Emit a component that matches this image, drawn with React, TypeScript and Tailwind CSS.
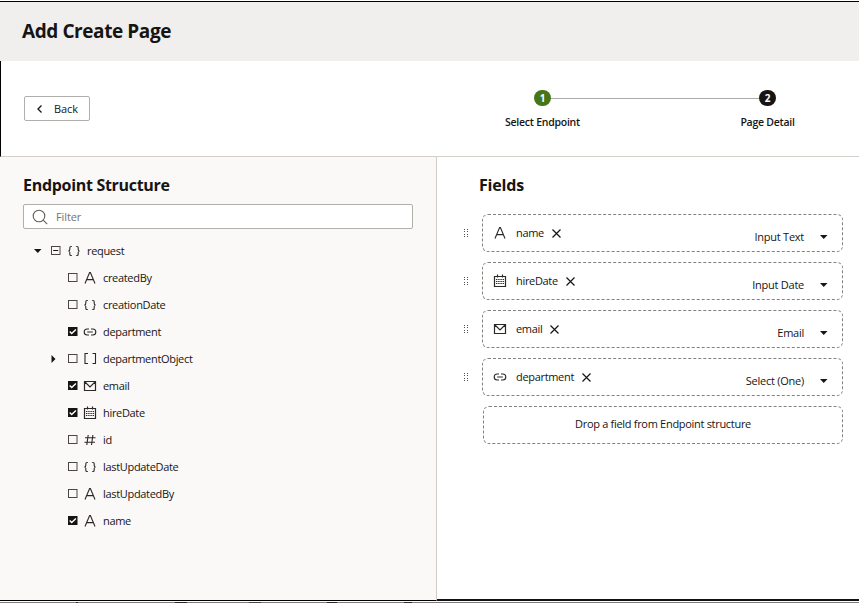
import React from "react";

type IconName = "text" | "braces" | "link" | "brackets" | "mail" | "calendar" | "hash";

function FieldIcon({ name }: { name: IconName }) {
  return (
    <svg width="14" height="14" viewBox="0 0 14 14" fill="none" stroke="#2b2825" strokeWidth="1.1" className="block shrink-0">
      {name === "text" && <path d="M2 12.5 6.6 1.5h.8L12 12.5M3.7 8.6h6.6" />}
      {name === "braces" && (
        <path d="M4.8 2.5H4c-.9 0-1.2.5-1.2 1.3v1.7C2.8 6.4 2.3 7 1.3 7c1 0 1.5.6 1.5 1.5v1.7c0 .8.3 1.3 1.2 1.3h.8M9.2 2.5h.8c.9 0 1.2.5 1.2 1.3v1.7c0 .9.5 1.5 1.5 1.5-1 0-1.5.6-1.5 1.5v1.7c0 .8-.3 1.3-1.2 1.3h-.8" />
      )}
      {name === "brackets" && <path d="M5 1.5H2v10h3M9.5 1.5h3v10h-3" />}
      {name === "link" && <path d="M6 4H4.2a3 3 0 0 0 0 6H6M8 4h1.8a3 3 0 0 1 0 6H8M4.2 7h5.6" strokeWidth="1.1" />}
      {name === "mail" && <path d="M1.5 2.5h11v9h-11zM2 3l5 5 5-5" strokeWidth="1.2" />}
      {name === "calendar" && (
        <>
          <path d="M1.5 2.5h11v10h-11zM4.5.5v3M9.5.5v3" strokeWidth="1.2" />
          <path d="M3 5.5h8M3 7.5h8M3 9.5h8" strokeDasharray="1.4 .8" />
        </>
      )}
      {name === "hash" && <path d="M5.2 2 3.8 12M9.9 2 8.5 12M2 4.8h10.5M1.5 9.2H12" />}
    </svg>
  );
}

function Checkbox({ state }: { state: "on" | "off" | "mixed" }) {
  return (
    <svg width="10" height="10" viewBox="0 0 10 10" fill="none" className="block shrink-0">
      <rect x=".5" y=".5" width="8.5" height="8" fill={state === "on" ? "#161513" : "none"} stroke={state === "on" ? "#161513" : "#4a4744"} />
      {state === "on" && <path d="M1.7 4.6 3.7 6.6 7.9 2.4" stroke="#fff" strokeWidth="1.4" />}
      {state === "mixed" && <path d="M2.2 4.5h5" stroke="#161513" />}
    </svg>
  );
}

type Row = { label: string; icon: IconName; checked?: boolean; expandable?: boolean };

const rows: Row[] = [
  { label: "createdBy", icon: "text" },
  { label: "creationDate", icon: "braces" },
  { label: "department", icon: "link", checked: true },
  { label: "departmentObject", icon: "brackets", expandable: true },
  { label: "email", icon: "mail", checked: true },
  { label: "hireDate", icon: "calendar", checked: true },
  { label: "id", icon: "hash" },
  { label: "lastUpdateDate", icon: "braces" },
  { label: "lastUpdatedBy", icon: "text" },
  { label: "name", icon: "text", checked: true },
];

const fields: { label: string; icon: IconName; type: string }[] = [
  { label: "name", icon: "text", type: "Input Text" },
  { label: "hireDate", icon: "calendar", type: "Input Date" },
  { label: "email", icon: "mail", type: "Email" },
  { label: "department", icon: "link", type: "Select (One)" },
];

function DownCaret() {
  return (
    <svg width="8" height="4" viewBox="0 0 8 4" className="block shrink-0">
      <path d="M0 0h7.5L3.75 4z" fill="#161513" />
    </svg>
  );
}

function Grip() {
  return (
    <svg width="5" height="9" viewBox="0 0 5 9" fill="#55514e" className="block shrink-0">
      <path d="M0 0h1v1H0zM3 0h1v1H3zM0 2h1v1H0zM3 2h1v1H3zM0 5h1v1H0zM3 5h1v1H3zM0 7h1v1H0zM3 7h1v1H3z" />
    </svg>
  );
}

export default function App() {
  return (
    <div className="flex h-[603px] w-[859px] flex-col overflow-hidden bg-white font-['Open_Sans','Noto_Sans',sans-serif] text-[11px] leading-4 text-[#161513]">
      <header className="mt-px h-[60px] shrink-0 border-t border-black bg-[#f0efed] pl-[22px] pt-[17px]">
        <h1 className="text-[19px] font-bold leading-6 tracking-[-0.42px]">Add Create Page</h1>
      </header>

      <section className="flex h-24 shrink-0 border-b border-l border-b-[#d3cfca] border-l-black pl-[23px]">
        <button className="mt-[35px] flex h-[25px] w-[66px] items-center rounded-[2px] border border-[#b1afac] pl-3">
          <svg width="5" height="8" viewBox="0 0 5 8" fill="none" stroke="#161513" strokeWidth="1.3">
            <path d="M4.5.5 1 4l3.5 3.5" />
          </svg>
          <span className="ml-3 font-medium tracking-[-0.1px]">Back</span>
        </button>
        <div className="ml-[390px] mt-[29px] flex w-[350px] flex-col">
          <div className="flex items-start pl-[54px]">
            <span className="flex h-4 w-[17px] items-center justify-center rounded-full bg-[#46761b] text-[10px] font-bold leading-4 text-white">1</span>
            <span className="mt-2 h-px w-[208px] bg-[#adaba8]" />
            <span className="flex h-4 w-[17px] items-center justify-center rounded-full bg-[#161513] text-[10px] font-bold leading-4 text-white">2</span>
          </div>
          <div className="mt-2 flex pl-[25px] text-[10.5px] font-semibold tracking-[-0.25px]">
            <span className="w-[75px] whitespace-nowrap text-center">Select Endpoint</span>
            <span className="ml-[160px] w-[55px] whitespace-nowrap text-center">Page Detail</span>
          </div>
        </div>
      </section>

      <main className="flex h-[444px] shrink-0">
        <aside className="w-[437px] shrink-0 border-b border-r border-b-black border-r-[#d3cbc5] bg-[#fbf9f8] pl-[23px] pt-4">
          <h2 className="text-base font-bold leading-6 tracking-[-0.3px]">Endpoint Structure</h2>
          <div className="mt-[7px] flex h-[25px] w-[390px] items-center rounded-[2px] border border-[#b1afac] bg-white pl-2">
            <svg width="16" height="16" viewBox="0 0 16 16" fill="none" stroke="#625e5a" strokeWidth="1.1">
              <circle cx="7" cy="7" r="5.8" />
              <path d="m11.2 11.2 4 4" />
            </svg>
            <span className="ml-2 tracking-[-0.1px] text-[#77736f]">Filter</span>
          </div>
          <ul className="mt-2 tracking-[-0.32px]">
            <li className="flex h-[27px] items-center pl-[11px]">
              <DownCaret />
              <span className="ml-[9px]"><Checkbox state="mixed" /></span>
              <span className="ml-[6px]"><FieldIcon name="braces" /></span>
              <span className="ml-[6px]">request</span>
            </li>
            {rows.map((r) => (
              <li key={r.label} className="flex h-[27px] items-center pl-7">
                <span className="w-[17px]">
                  {r.expandable && (
                    <svg width="5" height="8" viewBox="0 0 5 8" className="block">
                      <path d="M.5 0v8l4-4z" fill="#161513" />
                    </svg>
                  )}
                </span>
                <Checkbox state={r.checked ? "on" : "off"} />
                <span className="ml-[5px]"><FieldIcon name={r.icon} /></span>
                <span className="ml-[6px]">{r.label}</span>
              </li>
            ))}
          </ul>
        </aside>

        <section className="flex-1 border-b-2 border-[#121115] pl-[27px] pt-4">
          <h2 className="pl-[15px] text-base font-bold leading-6 tracking-[-0.2px]">Fields</h2>
          <div className="mt-[17px] flex flex-col gap-[10px]">
            {fields.map((f) => (
              <div key={f.label} className="flex items-center">
                <Grip />
                <div className="ml-[13px] flex h-[38px] w-[361px] items-center rounded-[6px] border border-dashed border-[#85827e] pl-[10px] pr-[14px]">
                  <FieldIcon name={f.icon} />
                  <span className="ml-[9px] tracking-[-0.32px]">{f.label}</span>
                  <svg width="9" height="9" viewBox="0 0 9 9" stroke="#161513" strokeWidth="1.15" className="ml-2">
                    <path d="m.5.5 8 8m0-8-8 8" />
                  </svg>
                  <span className="ml-auto mt-2 tracking-[-0.25px]">{f.type}</span>
                  <span className="ml-4 mt-2"><DownCaret /></span>
                </div>
              </div>
            ))}
            <div className="ml-[18px] flex h-[38px] w-[361px] pl-px">
              <div className="flex w-[360px] items-center justify-center rounded-[6px] border border-dashed border-[#85827e] pb-0.5 tracking-[-0.3px]">
                Drop a field from Endpoint structure
              </div>
            </div>
          </div>
        </section>
      </main>
      <div className="mt-px flex h-px shrink-0 bg-[#7d7b7c]">
        <span className="ml-[76px] w-0.5 bg-[#2f2527]" />
        <span className="ml-[97px] w-3 bg-[#2f2527]" />
        <span className="ml-[62px] w-3 bg-[#4d4648]" />
        <span className="ml-[66px] w-[10px] bg-[#2f2527]" />
        <span className="ml-[67px] w-2 bg-[#2f2527]" />
      </div>
    </div>
  );
}
